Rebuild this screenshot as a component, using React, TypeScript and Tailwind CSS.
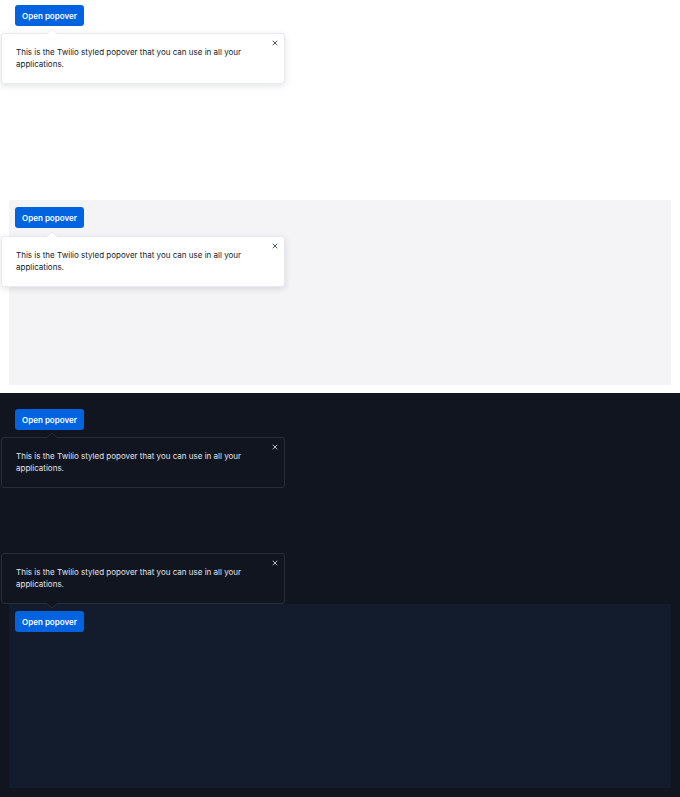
import { X } from "lucide-react";

type Placement = "bottom" | "top";

const Arrow = ({ dark, placement }: { dark: boolean; placement: Placement }) => {
  const fill = dark ? "#11151f" : "#ffffff";
  const stroke = dark ? "#2b3242" : "#e1e3ea";
  if (placement === "bottom") {
    return (
      <svg className="absolute left-[43px] top-[-5px]" width="14" height="6" viewBox="0 0 14 6">
        <path d="M0 6 L7 0 L14 6" fill={fill} stroke={stroke} strokeWidth="0.8" />
        <rect x="0" y="5.4" width="14" height="1" fill={fill} />
      </svg>
    );
  }
  return (
    <svg className="absolute left-[43px] bottom-[-5px]" width="14" height="6" viewBox="0 0 14 6">
      <path d="M0 0 L7 6 L14 0" fill={fill} stroke={stroke} strokeWidth="0.8" />
      <rect x="0" y="-0.4" width="14" height="1" fill={fill} />
    </svg>
  );
};

const Popover = ({
  dark,
  placement,
  className,
}: {
  dark: boolean;
  placement: Placement;
  className: string;
}) => (
  <div
    className={`absolute w-[284px] h-[51px] rounded-[3px] border pl-[14px] pr-[12px] pt-[13px] ${className} ${
      dark
        ? "bg-[#11151f] border-[#262d3b] text-[#e1e3ea]"
        : "bg-white border-[#e8e9ee] text-[#121c2d] shadow-[0_2px_6px_rgba(18,28,45,0.12)]"
    }`}
  >
    <Arrow dark={dark} placement={placement} />
    <button
      className={`absolute right-[3px] top-[3px] w-[12px] h-[12px] flex items-center justify-center ${
        dark ? "text-[#b3b8c5]" : "text-[#4b5671]"
      }`}
    >
      <X size={8} strokeWidth={3} />
    </button>
    <p className="text-[8px] leading-[11.5px]">
      This is the Twilio styled popover that you can use in all your applications.
    </p>
  </div>
);

const OpenButton = () => (
  <button className="flex items-center justify-center h-[21px] w-[69px] rounded-[3px] bg-[#0263e0] text-white text-[8px] font-semibold">
    Open popover
  </button>
);

export default function App() {
  return (
    <div
      className="flex flex-col w-[680px] h-[797px] overflow-hidden"
      style={{ fontFamily: "Inter, 'Noto Sans', sans-serif" }}
    >
      {/* light, plain */}
      <section className="relative flex h-[197px] items-start bg-white pt-[5px] pl-[15px]">
        <OpenButton />
        <Popover dark={false} placement="bottom" className="left-[1px] top-[33px]" />
      </section>

      {/* light, inside box */}
      <section className="relative flex flex-col h-[196px] bg-white px-[9px] pt-[3px]">
        <div className="flex items-start h-[185px] bg-[#f4f4f6] pt-[7px] pl-[6px]">
          <OpenButton />
        </div>
        <Popover dark={false} placement="bottom" className="left-[1px] top-[39px]" />
      </section>

      {/* dark, plain */}
      <section className="relative flex h-[202px] items-start bg-[#11151f] pt-[16px] pl-[15px]">
        <OpenButton />
        <Popover dark={true} placement="bottom" className="left-[1px] top-[44px]" />
      </section>

      {/* dark, inside box, popover above */}
      <section className="relative flex flex-col h-[202px] bg-[#11151f] px-[9px] pt-[9px]">
        <div className="flex items-start h-[184px] bg-[#121c2d] pt-[7px] pl-[6px]">
          <OpenButton />
        </div>
        <Popover dark={true} placement="top" className="left-[1px] top-[-42px]" />
      </section>
    </div>
  );
}
